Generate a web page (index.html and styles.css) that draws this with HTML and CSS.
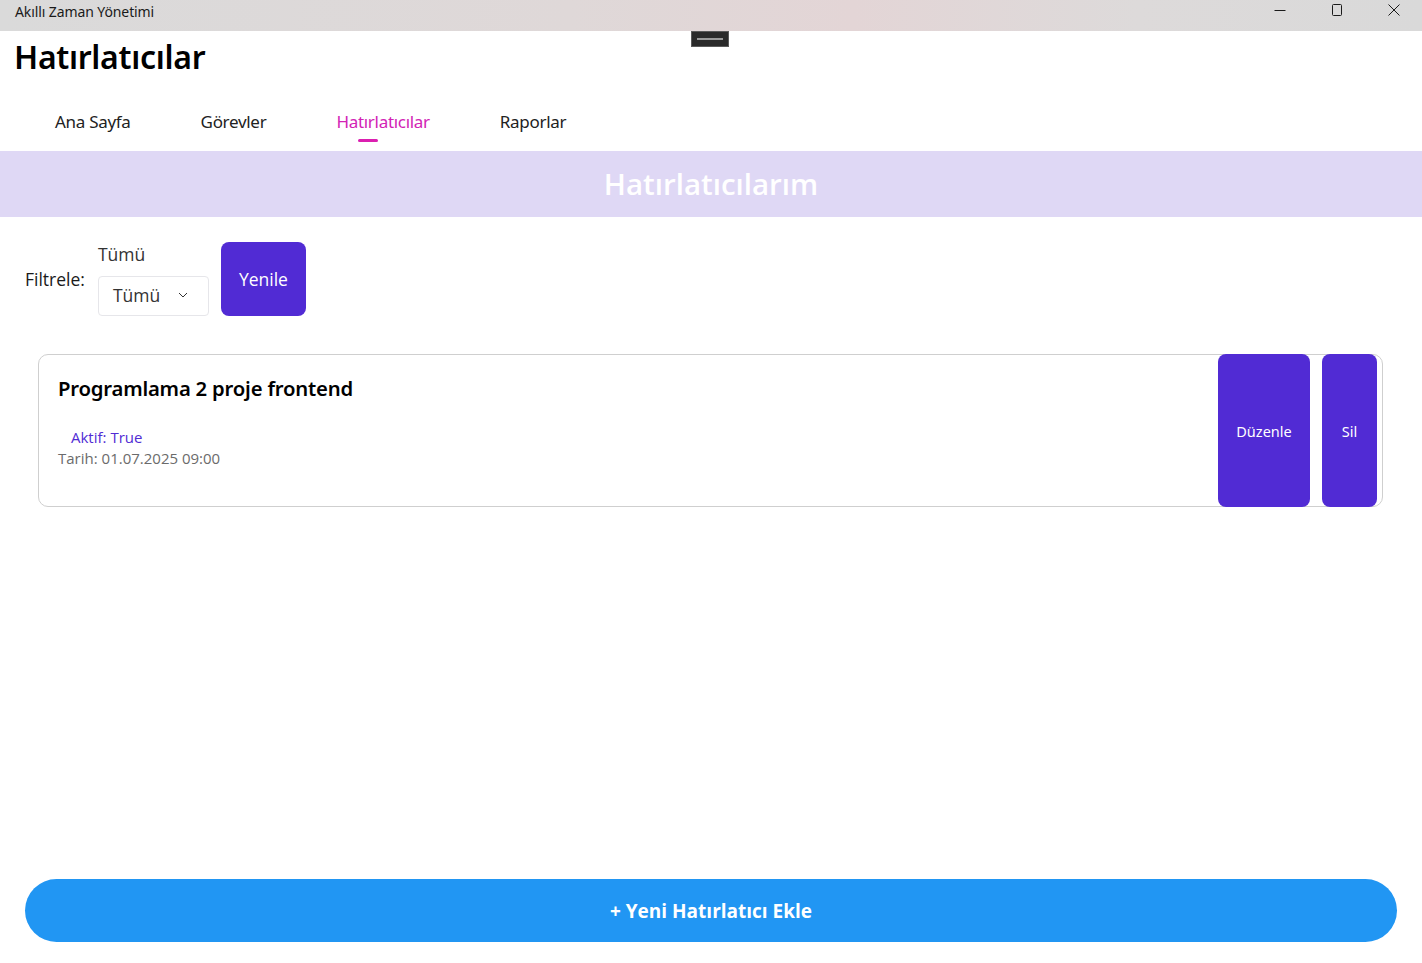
FILE: index.html
```html
<!DOCTYPE html>
<html lang="tr">
<head>
    <meta charset="UTF-8">
    <meta name="viewport" content="width=device-width, initial-scale=1.0">
    <title>Akıllı Zaman Yönetimi</title>
    <link rel="stylesheet" href="styles.css">
</head>
<body>
    <div class="window">
        <div class="titlebar">
            <span class="app-name">Akıllı Zaman Yönetimi</span>
            <div class="win-controls">
                <span class="win-btn">
                    <svg width="12" height="12" viewBox="0 0 12 12"><path d="M0.5 6.5h11" stroke="#1a1a1a" stroke-width="1"/></svg>
                </span>
                <span class="win-btn">
                    <svg width="12" height="12" viewBox="0 0 12 12"><rect x="1.5" y="0.5" width="9" height="11" rx="1" fill="none" stroke="#1a1a1a" stroke-width="1"/></svg>
                </span>
                <span class="win-btn">
                    <svg width="12" height="12" viewBox="0 0 12 12"><path d="M0.5 0.5l11 11M11.5 0.5l-11 11" stroke="#1a1a1a" stroke-width="1"/></svg>
                </span>
            </div>
        </div>

        <div class="debug-bar"><span></span></div>

        <div class="page">
            <h1 class="page-title">Hatırlatıcılar</h1>

            <nav class="tabs">
                <a href="#" class="tab">Ana Sayfa</a>
                <a href="#" class="tab">Görevler</a>
                <a href="#" class="tab active">Hatırlatıcılar<i class="tab-line"></i></a>
                <a href="#" class="tab">Raporlar</a>
            </nav>

            <div class="band">Hatırlatıcılarım</div>

            <div class="filter-row">
                <span class="filter-label">Filtrele:</span>
                <div class="picker-group">
                    <span class="picker-title">Tümü</span>
                    <div class="picker">
                        <span>Tümü</span>
                        <svg width="10" height="6" viewBox="0 0 10 6"><path d="M1 1l4 4 4-4" fill="none" stroke="#333" stroke-width="1"/></svg>
                    </div>
                </div>
                <button class="btn-primary refresh-btn">Yenile</button>
            </div>

            <div class="reminder-card">
                <div class="reminder-info">
                    <h3>Programlama 2 proje frontend</h3>
                    <span class="status">Aktif: True</span>
                    <span class="date">Tarih: 01.07.2025 09:00</span>
                </div>
                <div class="card-actions">
                    <button class="btn-primary edit-btn">Düzenle</button>
                    <button class="btn-primary delete-btn">Sil</button>
                </div>
            </div>

            <div class="bottom">
                <button class="add-btn">+ Yeni Hatırlatıcı Ekle</button>
            </div>
        </div>
    </div>
</body>
</html>
```

FILE: styles.css
```css
* {
    margin: 0;
    padding: 0;
    box-sizing: border-box;
}

body {
    font-family: 'Open Sans', sans-serif;
    background-color: #fff;
    color: #000;
}

.window {
    position: relative;
    height: 100vh;
    display: flex;
    flex-direction: column;
}

.titlebar {
    height: 31px;
    flex-shrink: 0;
    display: flex;
    align-items: flex-start;
    justify-content: space-between;
    padding-left: 15px;
    background: linear-gradient(90deg, #dadada 0%, #dfd8d8 40%, #e3d5d6 60%, #dddada 80%, #d9d9d9 100%);
}

.app-name {
    font-family: 'Noto Sans', sans-serif;
    font-size: 14px;
    line-height: 24px;
    color: #1a1a1a;
    letter-spacing: -0.1px;
}

.win-controls {
    display: flex;
    height: 100%;
}

.win-btn {
    width: 57px;
    display: flex;
    justify-content: center;
    padding-top: 4px;
}

.debug-bar {
    position: absolute;
    top: 31px;
    left: 691px;
    width: 38px;
    height: 16px;
    background-color: #2a2a2a;
    border: 1px solid #5a5a5a;
    display: flex;
    align-items: center;
    justify-content: center;
}

.debug-bar span {
    width: 26px;
    height: 2px;
    background-color: #9a9a9a;
}

.page {
    flex: 1;
    display: flex;
    flex-direction: column;
}

.page-title {
    font-family: 'Noto Sans', sans-serif;
    font-size: 32px;
    font-weight: 600;
    padding: 4px 0 0 14px;
    height: 59px;
    letter-spacing: -0.3px;
}

.tabs {
    display: flex;
    padding-left: 20px;
    height: 61px;
}

.tab {
    position: relative;
    padding: 20px 35px 0;
    font-family: 'Noto Sans', sans-serif;
    font-size: 17px;
    color: #222;
    text-decoration: none;
    letter-spacing: -0.3px;
}

.tab.active {
    color: #d223b5;
}

.tab-line {
    position: absolute;
    left: 57px;
    top: 49px;
    width: 20px;
    height: 3px;
    border-radius: 2px;
    background-color: #db1fb0;
}

.band {
    height: 66px;
    background-color: #dfd8f5;
    color: #fff;
    font-size: 29.5px;
    font-weight: 600;
    display: flex;
    align-items: center;
    justify-content: center;
    padding-bottom: 2px;
}

.filter-row {
    display: flex;
    align-items: center;
    padding: 25px 0 0 25px;
}

.filter-label {
    font-size: 17.5px;
    color: #1a1a1a;
    margin-right: 13px;
}

.picker-group {
    display: flex;
    flex-direction: column;
    margin-right: 12px;
}

.picker-title {
    font-size: 17.5px;
    color: #333;
    height: 34px;
    line-height: 24px;
}

.picker {
    width: 111px;
    height: 40px;
    border: 1px solid #e6e6ea;
    border-radius: 4px;
    display: flex;
    align-items: center;
    justify-content: space-between;
    padding: 0 20px 2px 14px;
    font-size: 17.5px;
    color: #333;
}

.btn-primary {
    background-color: #512bd4;
    color: #fff;
    border: none;
    border-radius: 8px;
    font-family: 'Open Sans', sans-serif;
    cursor: pointer;
}

.refresh-btn {
    width: 85px;
    height: 74px;
    font-size: 17.5px;
}

.reminder-card {
    margin: 38px 39px 0 38px;
    height: 153px;
    border: 1px solid #cfcfcf;
    border-radius: 10px;
    display: flex;
    justify-content: space-between;
}

.reminder-info {
    display: flex;
    flex-direction: column;
    padding: 19px 0 0 19px;
}

.reminder-info h3 {
    font-family: 'Noto Sans', sans-serif;
    font-size: 20.3px;
    font-weight: 600;
    line-height: 28px;
    margin-bottom: 25px;
    letter-spacing: -0.2px;
}

.status {
    font-size: 15px;
    color: #512bd4;
    margin-left: 13px;
    line-height: 21px;
}

.date {
    font-size: 15px;
    color: #6b6b6b;
    line-height: 21px;
}

.card-actions {
    display: flex;
    gap: 12px;
    margin: -1px 5px -1px 0;
}

.edit-btn,
.delete-btn {
    font-family: 'Noto Sans', sans-serif;
    font-size: 14.5px;
    height: 100%;
}

.edit-btn {
    width: 92px;
}

.delete-btn {
    width: 55px;
}

.bottom {
    margin-top: auto;
    padding: 0 25px 21px;
}

.add-btn {
    width: 100%;
    height: 63px;
    border: none;
    border-radius: 32px;
    background-color: #2196f3;
    color: #fff;
    font-family: 'Open Sans', sans-serif;
    font-size: 19px;
    font-weight: 700;
    cursor: pointer;
}
```
